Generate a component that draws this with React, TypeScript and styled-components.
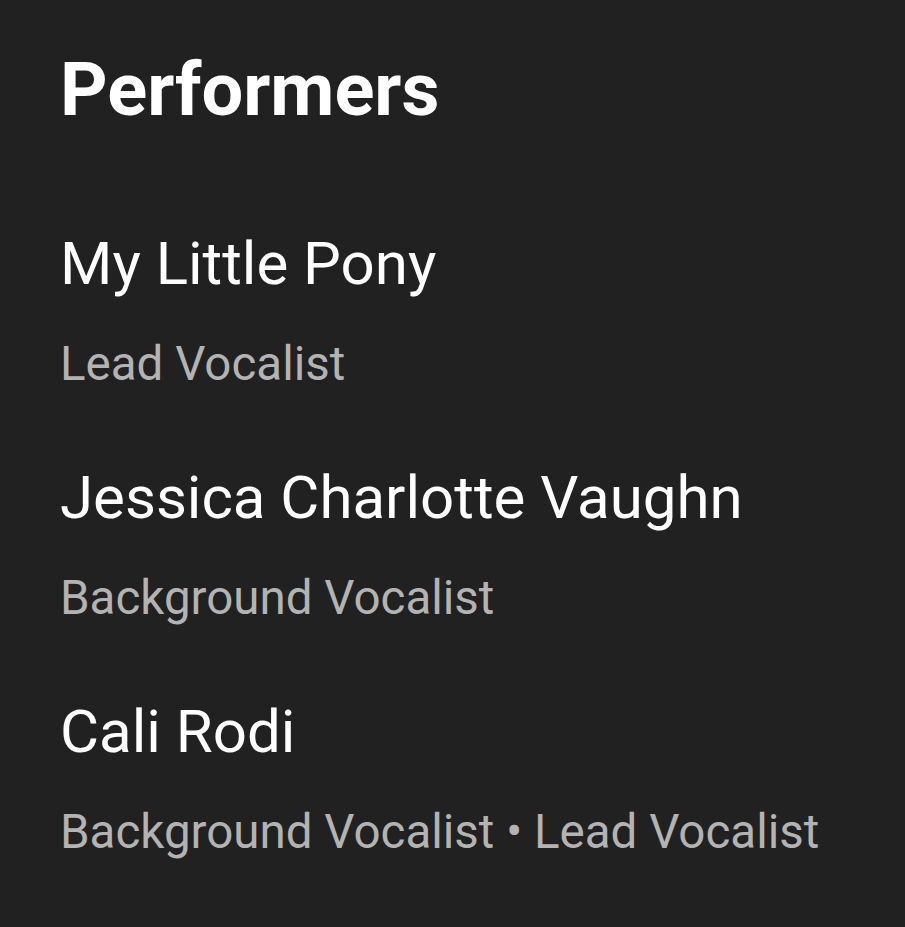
import React from "react";
import styled, { createGlobalStyle } from "styled-components";

const Global = createGlobalStyle`
  html, body { margin: 0; padding: 0; background: #212121; }
  body { font-family: Roboto, "Noto Sans", sans-serif; -webkit-font-smoothing: antialiased; }
`;

const Page = styled.main`
  min-height: 927px;
  background: #212121;
  padding: 40px 0 0 60px;
  box-sizing: border-box;
`;

const Heading = styled.h1`
  margin: 0 0 84px;
  font-size: 74px;
  line-height: 100px;
  font-weight: 700;
  color: #ffffff;
`;

const List = styled.ul`
  list-style: none;
  margin: 0;
  padding: 0;
  display: flex;
  flex-direction: column;
  gap: 54px;
`;

const Item = styled.li`
  display: flex;
  flex-direction: column;
  gap: 20px;
`;

const Name = styled.span`
  font-size: 60px;
  line-height: 80px;
  font-weight: 400;
  color: #ffffff;
`;

const Role = styled.span`
  font-size: 47.5px;
  line-height: 80px;
  font-weight: 400;
  color: #b3b3b3;
`;

const performers = [
  { name: "My Little Pony", roles: ["Lead Vocalist"] },
  { name: "Jessica Charlotte Vaughn", roles: ["Background Vocalist"] },
  { name: "Cali Rodi", roles: ["Background Vocalist", "Lead Vocalist"] },
];

export default function App() {
  return (
    <>
      <Global />
      <Page>
        <Heading>Performers</Heading>
        <List>
          {performers.map((p) => (
            <Item key={p.name}>
              <Name>{p.name}</Name>
              <Role>{p.roles.join(" • ")}</Role>
            </Item>
          ))}
        </List>
      </Page>
    </>
  );
}
